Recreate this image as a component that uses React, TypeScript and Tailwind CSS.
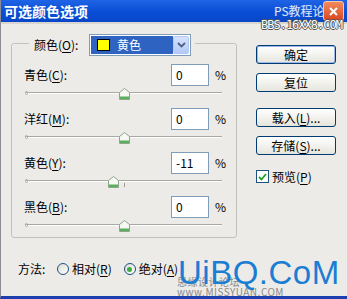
import React from "react";

const F = '"Noto Sans CJK SC", "Liberation Sans", sans-serif';

function U({ c }: { c: string }) {
  return <span className="underline underline-offset-[2px]">{c}</span>;
}

function Thumb() {
  return (
    <svg width="11" height="12" viewBox="0 0 11 12">
      <path d="M0.5 4.5 L5.5 0.5 L10.5 4.5 V11.5 H0.5 Z" fill="#f7f7f3" stroke="#8fa58f" />
      <rect x="1" y="8.5" width="9" height="2.5" fill="#5ab05a" />
    </svg>
  );
}

function Slider({ pos, tick }: { pos: number; tick?: boolean }) {
  return (
    <div className="relative h-[14px] w-[197px] ml-[1px]">
      <div className="absolute left-0 right-0 top-[6px] h-[1px] bg-[#a9a9a4]" />
      <div className="absolute left-0 right-0 top-[7px] h-[1px] bg-white" />
      <div className="absolute left-0 top-[5px] w-[3px] h-[4px] rounded-full border border-[#a9a9a4]" />
      {tick && <div className="absolute left-[99px] top-[9px] w-[1px] h-[4px] bg-[#9a9a96]" />}
      <div className="absolute top-[2px]" style={{ left: pos - 5 }}>
        <Thumb />
      </div>
    </div>
  );
}

function Row({ label, k, rest, value, pos, tick }: { label: string; k: string; rest: string; value: string; pos: number; tick?: boolean }) {
  return (
    <div className="flex flex-col">
      <div className="flex items-center h-[22px]">
        <div className="w-[147px] text-[12px] text-black leading-none">
          {label}(<U c={k} />){rest}
        </div>
        <div className="w-[38px] h-[22px] bg-white border border-[#7f9db9] flex items-center pl-[4px] text-[12px] text-black leading-none">
          {value}
        </div>
        <div className="ml-[6px] text-[12px] text-black leading-none">%</div>
      </div>
      <Slider pos={pos} tick={tick} />
    </div>
  );
}

function Btn({ children, def }: { children: React.ReactNode; def?: boolean }) {
  return (
    <div
      className={
        "w-[80px] h-[19px] rounded-[3px] border border-[#003c74] flex items-center justify-center text-[12px] text-black leading-none bg-gradient-to-b from-white to-[#e6e5dd] " +
        (def ? "shadow-[inset_0_0_0_1px_#9db7e8]" : "")
      }
    >
      {children}
    </div>
  );
}

function Radio({ checked }: { checked?: boolean }) {
  return (
    <div className="w-[12px] h-[12px] rounded-full border border-[#1c5180] bg-gradient-to-br from-[#dcdcd6] to-white flex items-center justify-center">
      {checked && <div className="w-[5px] h-[5px] rounded-full bg-[#3fae3f]" />}
    </div>
  );
}

export default function App() {
  return (
    <div
      className="relative w-[347px] h-[299px] overflow-hidden bg-[#ecebe8] flex flex-col border-l border-l-[#8c8c98] border-b-[3px] border-b-[#1d3fae]"
      style={{ fontFamily: F }}
    >
      {/* title bar */}
      <div className="relative h-[22px] bg-gradient-to-b from-[#1f63e6] via-[#0a4fd6] to-[#0846c9] flex items-center pl-[3px] shrink-0">
        <span className="text-white font-bold text-[14px] leading-none tracking-[0px]">可选颜色选项</span>
      </div>
      <div className="h-[2px] bg-[#d8d6ce] shrink-0" />

      {/* body */}
      <div className="flex flex-1">
        {/* left */}
        <div className="flex flex-col pl-[10px]">
          <div className="relative mt-[19px] w-[226px] h-[195px] border border-[#c2c2bc] rounded-[3px] pt-[20px] pl-[12px] flex flex-col gap-[8px]">
            {/* legend */}
            <div className="absolute left-[17px] top-[-10px] flex items-center bg-[#ecebe8] pl-[5px] pr-[4px] h-[22px]">
              <span className="text-[12px] text-black leading-none w-[55px]">
                颜色(<U c="O" />):
              </span>
              <div className="w-[102px] h-[22px] border border-[#7f9db9] bg-white flex items-center p-[1px]">
                <div className="flex-1 h-full bg-[#2f63c2] flex items-center pl-[6px]">
                  <div className="w-[13px] h-[12px] bg-[#ffff00] border border-black" />
                  <span className="ml-[7px] text-white text-[12px] leading-none">黄色</span>
                </div>
                <div className="w-[16px] h-full rounded-[2px] bg-gradient-to-b from-[#d6e2fd] to-[#b3c9f7] border border-[#b4c8f6] flex items-center justify-center">
                  <svg width="9" height="6" viewBox="0 0 9 6">
                    <path d="M1 1 L4.5 4.5 L8 1" fill="none" stroke="#4d6185" strokeWidth="1.8" />
                  </svg>
                </div>
              </div>
            </div>
            <Row label="青色" k="C" rest=":" value="0" pos={99} />
            <Row label="洋红" k="M" rest=":" value="0" pos={99} />
            <Row label="黄色" k="Y" rest=":" value="-11" pos={88} tick />
            <Row label="黑色" k="B" rest=":" value="0" pos={99} />
          </div>
          <div className="mt-[23px] ml-[7px] flex items-center h-[16px] text-[12px] text-black leading-none">
            <span className="w-[39px]">方法:</span>
            <Radio />
            <span className="ml-[3px]">
              相对(<U c="R" />)
            </span>
            <div className="ml-[12px]">
              <Radio checked />
            </div>
            <span className="ml-[3px]">
              绝对(<U c="A" />)
            </span>
          </div>
        </div>

        {/* right */}
        <div className="flex flex-col ml-[19px] pt-[21px]">
          <Btn def>确定</Btn>
          <div className="mt-[9px]">
            <Btn>复位</Btn>
          </div>
          <div className="mt-[16px]">
            <Btn>
              载入(<U c="L" />)...
            </Btn>
          </div>
          <div className="mt-[9px]">
            <Btn>
              存储(<U c="S" />)...
            </Btn>
          </div>
          <div className="mt-[15px] flex items-center">
            <div className="w-[13px] h-[13px] bg-white border border-[#1c5180] flex items-center justify-center">
              <svg width="9" height="8" viewBox="0 0 9 8">
                <path d="M1 4 L3.5 6.5 L8 1" fill="none" stroke="#21a121" strokeWidth="1.8" />
              </svg>
            </div>
            <span className="ml-[3px] text-[12px] text-black leading-none">
              预览(<U c="P" />)
            </span>
          </div>
        </div>
      </div>

      {/* title watermark */}
      <div className="absolute left-[273px] top-[5px] text-[12px] leading-none text-[#d6e4ff] [text-shadow:0_0_1px_#5a7fc8]">
        PS教程论坛
      </div>
      {/* close button */}
      <div className="absolute left-[322px] top-[1px] w-[21px] h-[20px] rounded-[3px] bg-gradient-to-b from-[#f08a5c] to-[#d9461f] border border-[#f7c7b0] flex items-center justify-center">
        <svg width="11" height="11" viewBox="0 0 11 11">
          <path d="M2 2 L9 9 M9 2 L2 9" stroke="white" strokeWidth="2" />
        </svg>
      </div>
      <div
        className="absolute left-[260px] top-[19px] text-[12px] leading-none tracking-[-1px] text-white [text-shadow:1px_0_0_#555,-1px_0_0_#555,0_1px_0_#555,0_-1px_0_#555]"
        style={{ fontFamily: '"DejaVu Sans Mono", monospace' }}
      >
        BBS.16XX8.COM
      </div>

      {/* bottom watermark */}
      <div className="absolute left-[176px] top-[277px] text-[10px] leading-none text-[#8a8a8a] tracking-[0.5px]">
        思缘设计论坛 www.MISSYUAN.COM
      </div>
      <div
        className="absolute left-[177px] top-[256px] text-[33px] leading-none text-[#1b7ed3] tracking-[0.5px]"
        style={{ fontFamily: '"Liberation Sans", sans-serif' }}
      >
        UiBQ.CoM
      </div>
    </div>
  );
}
